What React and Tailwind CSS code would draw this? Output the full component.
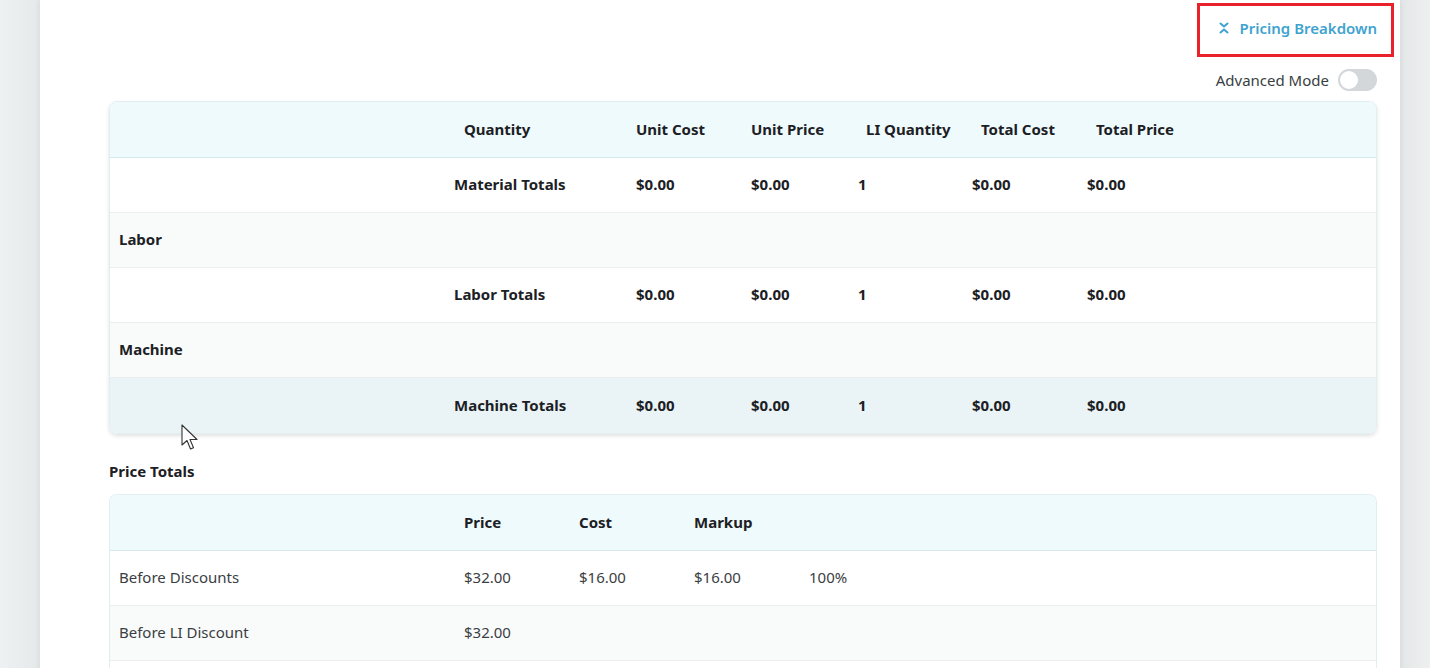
import React from "react";

const font = { fontFamily: "'Noto Sans', 'Open Sans', sans-serif" };

function Row({ bg, cells, cols, pads, bold = true, last = false }) {
  return (
    <div
      className={`grid h-[55px] items-center ${bg} ${last ? "" : "border-b border-[#eaeeef]"}`}
      style={{ gridTemplateColumns: cols }}
    >
      {cells.map((c, i) => (
        <div
          key={i}
          className={`${bold ? "font-bold text-[#1c2024]" : "font-normal text-[#3a3e43]"} pb-[2px] text-[15px] leading-5 whitespace-nowrap`}
          style={{ paddingLeft: pads[i] }}
        >
          {c}
        </div>
      ))}
    </div>
  );
}

export default function App() {
  const cols1 = "335px 182px 115px 107px 114px 115px 1fr";
  const cellPads1 = [9, 9, 9, 9, 9, 9, 9];
  const headPads1 = [9, 19, 9, 9, 17, 18, 18];
  const cols2 = "345px 115px 115px 115px 115px 1fr";
  const pads2 = [9, 9, 9, 9, 9, 9];

  return (
    <div className="flex min-h-screen bg-[#eef1f1]" style={font}>
      <div className="w-[40px] shrink-0 bg-gradient-to-r from-[#eef1f1] to-[#e6e9e9]" />
      <div className="relative w-[1360px] shrink-0 bg-white pl-[69px] pr-[23px] shadow-[0_0_6px_rgba(0,0,0,0.08)]">
        {/* top action */}
        <div className="relative flex h-[56px] items-center justify-end">
          <button className="flex items-center gap-[10px] text-[15px] font-semibold leading-5 text-[#3fa3cf]">
            <svg width="12" height="14" viewBox="0 0 12 14" fill="none" stroke="#3fa3cf" strokeWidth="2" strokeLinecap="round" strokeLinejoin="round">
              <path d="M2.5 2.5l3.5 3 3.5-3" />
              <path d="M2.5 11.5l3.5-3 3.5 3" />
            </svg>
            Pricing Breakdown
          </button>
          <div className="pointer-events-none absolute right-[-17px] top-[3px] h-[54px] w-[197px] border-[3px] border-[#e8212a]" />
        </div>
        {/* advanced mode */}
        <div className="mt-[13px] flex h-[22px] items-center justify-end gap-[9px]">
          <span className="text-[15px] leading-5 text-[#3a3e43]">Advanced Mode</span>
          <div className="flex h-[22px] w-[39px] items-center rounded-full bg-[#d3d7da] px-[2px]">
            <div className="h-[18px] w-[18px] rounded-full bg-white" />
          </div>
        </div>

        {/* table 1 */}
        <div className="mt-[10px] overflow-hidden rounded-lg border border-[#e2eef2] shadow-[0_2px_4px_rgba(0,0,0,0.12)]">
          <div
            className="grid h-[56px] items-center border-b border-[#d6e8ee] bg-[#effafd]"
            style={{ gridTemplateColumns: cols1 }}
          >
            {["", "Quantity", "Unit Cost", "Unit Price", "LI Quantity", "Total Cost", "Total Price"].map((h, i) => (
              <div key={i} className="whitespace-nowrap pb-[2px] text-[15px] font-bold leading-5 text-[#1c2024]" style={{ paddingLeft: headPads1[i] }}>
                {h}
              </div>
            ))}
          </div>
          <Row bg="bg-white" cols={cols1} pads={cellPads1} cells={["", "Material Totals", "$0.00", "$0.00", "1", "$0.00", "$0.00"]} />
          <Row bg="bg-[#f9fbfb]" cols={cols1} pads={cellPads1} cells={["Labor", "", "", "", "", "", ""]} />
          <Row bg="bg-white" cols={cols1} pads={cellPads1} cells={["", "Labor Totals", "$0.00", "$0.00", "1", "$0.00", "$0.00"]} />
          <Row bg="bg-[#f9fbfb]" cols={cols1} pads={cellPads1} cells={["Machine", "", "", "", "", "", ""]} />
          <Row bg="bg-[#eaf4f7]" cols={cols1} pads={cellPads1} last cells={["", "Machine Totals", "$0.00", "$0.00", "1", "$0.00", "$0.00"]} />
        </div>

        <div className="mt-[27px] text-[15px] font-bold leading-5 text-[#1c2024]">Price Totals</div>

        {/* table 2 */}
        <div className="mt-[13px] overflow-hidden rounded-t-lg border border-b-0 border-[#e2eef2]">
          <div
            className="grid h-[56px] items-center border-b border-[#d6e8ee] bg-[#effafd]"
            style={{ gridTemplateColumns: cols2 }}
          >
            {["", "Price", "Cost", "Markup", "", ""].map((h, i) => (
              <div key={i} className="whitespace-nowrap pb-[2px] text-[15px] font-bold leading-5 text-[#1c2024]" style={{ paddingLeft: pads2[i] }}>
                {h}
              </div>
            ))}
          </div>
          <Row bg="bg-white" cols={cols2} pads={pads2} bold={false} cells={["Before Discounts", "$32.00", "$16.00", "$16.00", "100%", ""]} />
          <Row bg="bg-[#f9fbfb]" cols={cols2} pads={pads2} bold={false} cells={["Before LI Discount", "$32.00", "", "", "", ""]} />
          <Row bg="bg-white" cols={cols2} pads={pads2} bold={false} cells={["", "", "", "", "", ""]} />
        </div>

        {/* mouse cursor overlay */}
        <svg className="pointer-events-none absolute left-[141px] top-[424px]" width="20" height="28" viewBox="0 0 20 28">
          <path d="M1 1 L1 21 L6 16.5 L9.5 25 L12.5 23.8 L9 15.5 L16 15.5 Z" fill="white" stroke="#333" strokeWidth="1.1" strokeLinejoin="round" />
        </svg>
      </div>
      <div className="flex-1 bg-gradient-to-r from-[#e4e7e7] to-[#eef0f0]" />
    </div>
  );
}
